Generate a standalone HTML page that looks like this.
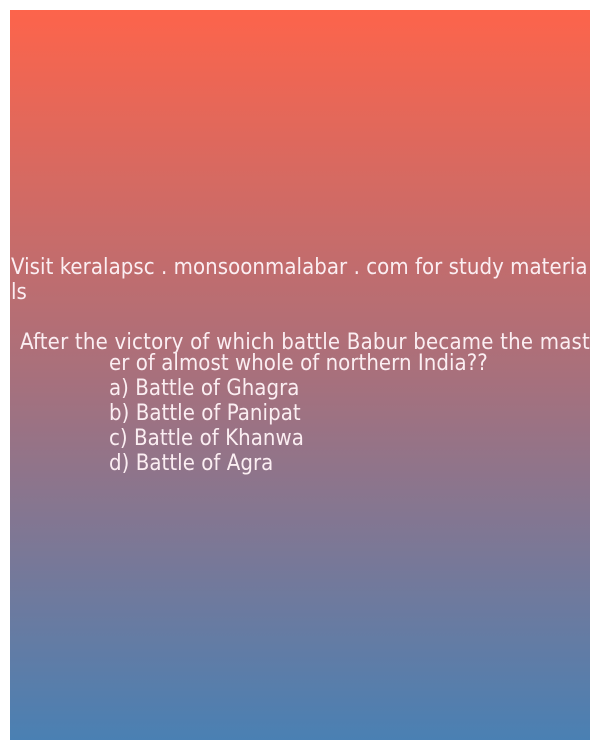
<!DOCTYPE html>
<html><head><meta charset="utf-8"><style>
html,body{margin:0;padding:0;background:#fff;width:600px;height:750px;overflow:hidden}
#b{position:absolute;left:10px;top:10px;width:580px;height:730px;background:linear-gradient(to bottom,#fd644b 0%,#a8707c 50%,#4a80b3 100%)}
.t{position:absolute;white-space:nowrap;color:#fbeef2;font-family:"DejaVu Sans Condensed","DejaVu Sans",sans-serif;font-stretch:condensed;font-size:22px;line-height:24px;letter-spacing:0.05px}
</style></head><body>
<div id="b"></div>
<div class="t" style="left:11px;top:256px">Visit keralapsc . monsoonmalabar . com for study materia</div>
<div class="t" style="left:11px;top:281px">ls</div>
<div class="t" style="left:20px;top:331px;letter-spacing:0.2px">After the victory of which battle Babur became the mast</div>
<div class="t" style="left:109px;top:352px">er of almost whole of northern India??</div>
<div class="t" style="left:109px;top:377px">a) Battle of Ghagra</div>
<div class="t" style="left:109px;top:402px">b) Battle of Panipat</div>
<div class="t" style="left:109px;top:427px">c) Battle of Khanwa</div>
<div class="t" style="left:109px;top:452px">d) Battle of Agra</div>
</body></html>
